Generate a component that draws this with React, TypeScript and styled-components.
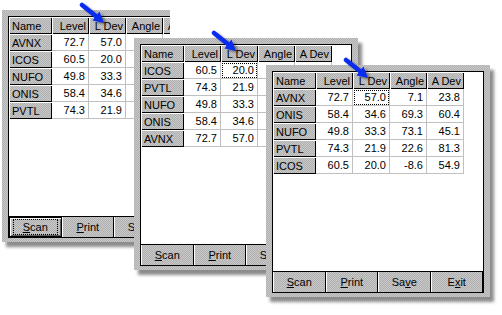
import React from "react";
import styled, { createGlobalStyle, css } from "styled-components";

const dither = css`
  background: repeating-conic-gradient(#c8c8c8 0 25%, #b0b0b0 0 50%) 0 0 / 2px 2px;
`;

const GlobalStyle = createGlobalStyle`
  html, body {
    margin: 0;
    padding: 0;
    background: #fff;
  }
  body {
    font-family: "Liberation Sans", Arial, sans-serif;
    font-size: 11px;
    color: #000;
  }
`;

type Row = string[];

const AVNX = ["AVNX", "72.7", "57.0", "7.1", "23.8"];
const ICOS = ["ICOS", "60.5", "20.0", "-8.6", "54.9"];
const NUFO = ["NUFO", "49.8", "33.3", "73.1", "45.1"];
const ONIS = ["ONIS", "58.4", "34.6", "69.3", "60.4"];
const PVTL = ["PVTL", "74.3", "21.9", "22.6", "81.3"];

const columns = ["Name", "Level", "L Dev", "Angle", "A Dev"];
const widths = [43, 37, 37, 37, 37];

const buttons = [
  { label: "Scan", key: 0 },
  { label: "Print", key: 0 },
  { label: "Save", key: 2 },
  { label: "Exit", key: 1 },
];

function App() {
  return (
    <>
      <GlobalStyle />
      <Desktop>
        <Clip>
          <ScanWindow
            left={2}
            top={10}
            rows={[AVNX, ICOS, NUFO, ONIS, PVTL]}
            defaultButton
          />
        </Clip>
        <ScanWindow left={134} top={38} rows={[ICOS, PVTL, NUFO, ONIS, AVNX]} focus />
        <ScanWindow left={266} top={65} rows={[AVNX, ONIS, NUFO, PVTL, ICOS]} focus />
      </Desktop>
    </>
  );
}

export default App;

function ScanWindow(props: {
  left: number;
  top: number;
  rows: Row[];
  focus?: boolean;
  defaultButton?: boolean;
}) {
  const { left, top, rows, focus, defaultButton } = props;
  return (
    <Frame $left={left} $top={top}>
      <Panel>
        <Grid>
          <colgroup>
            {widths.map((w, i) => (
              <col key={i} style={{ width: w }} />
            ))}
          </colgroup>
          <thead>
            <tr>
              {columns.map((c, i) => (
                <HeadCell key={c} $left={i === 0}>
                  {c}
                </HeadCell>
              ))}
            </tr>
          </thead>
          <tbody>
            {rows.map((r, ri) => (
              <tr key={r[0]}>
                <NameCell>{r[0]}</NameCell>
                {r.slice(1).map((v, ci) => (
                  <DataCell key={ci} $focus={!!focus && ri === 0 && ci === 1}>
                    {v}
                  </DataCell>
                ))}
              </tr>
            ))}
          </tbody>
        </Grid>
        <Filler />
        <ButtonBar>
          {buttons.map((b, i) => (
            <Button key={b.label} $default={!!defaultButton && i === 0}>
              <ButtonLabel $focus={!!defaultButton && i === 0}>
                {b.label.slice(0, b.key)}
                <u>{b.label[b.key]}</u>
                {b.label.slice(b.key + 1)}
              </ButtonLabel>
            </Button>
          ))}
        </ButtonBar>
      </Panel>
      <Arrow width="36" height="30" viewBox="0 0 36 30">
        <line x1="6" y1="5" x2="21" y2="17" stroke="#0a2cf0" strokeWidth="4.5" strokeLinecap="round" />
        <polygon points="28,23 16.5,20.5 23.5,11.5" fill="#0a2cf0" />
      </Arrow>
    </Frame>
  );
}

const Desktop = styled.div`
  position: relative;
  width: 502px;
  height: 315px;
  overflow: hidden;
  background: #fff;
`;

const Clip = styled.div`
  position: absolute;
  left: 0;
  top: 0;
  width: 170px;
  height: 260px;
  overflow: hidden;
`;

const Frame = styled.div<{ $left: number; $top: number }>`
  position: absolute;
  left: ${(p) => p.$left}px;
  top: ${(p) => p.$top}px;
  width: 224px;
  height: 232px;
  box-sizing: border-box;
  padding: 6px 6px 4px 6px;
  ${dither}
  box-shadow: 4px 5px 3px rgba(0, 0, 0, 0.45);
`;

const Panel = styled.div`
  height: 100%;
  box-sizing: border-box;
  border: 1px solid #000;
  background: #fff;
  display: flex;
  flex-direction: column;
`;

const Grid = styled.table`
  border-collapse: separate;
  border-spacing: 0;
  table-layout: fixed;
  width: 191px;
  font-size: 11px;
`;

const bevel = css`
  ${dither}
  box-shadow: inset 1px 1px #fff, inset -1px -1px #000;
`;

const HeadCell = styled.th<{ $left: boolean }>`
  ${bevel}
  height: 17px;
  box-sizing: border-box;
  padding: 0 3px 0 3px;
  font-weight: normal;
  text-align: ${(p) => (p.$left ? "left" : "right")};
  white-space: nowrap;
  overflow: hidden;
`;

const NameCell = styled.td`
  ${bevel}
  height: 17px;
  box-sizing: border-box;
  padding: 0 3px;
  text-align: left;
`;

const DataCell = styled.td<{ $focus: boolean }>`
  height: 17px;
  box-sizing: border-box;
  padding: 0 3px 0 0;
  text-align: right;
  border-right: 1px solid #c0c0c0;
  border-bottom: 1px solid #c0c0c0;
  white-space: nowrap;
  ${(p) =>
    p.$focus &&
    css`
      outline: 1px dotted #000;
      outline-offset: -2px;
    `}
`;

const Filler = styled.div`
  flex: 1;
`;

const ButtonBar = styled.div`
  display: flex;
  height: 21px;
  box-sizing: border-box;
  border-top: 1px solid #000;
`;

const Button = styled.div<{ $default: boolean }>`
  flex: 1;
  display: flex;
  align-items: center;
  justify-content: center;
  box-sizing: border-box;
  ${dither}
  border-left: 1px solid #fff;
  border-right: 1px solid #000;
  ${(p) =>
    p.$default &&
    css`
      border: 1px solid #000;
      box-shadow: inset 1px 1px #fff, inset -1px -1px #606060;
    `}
`;

const ButtonLabel = styled.span<{ $focus: boolean }>`
  font-size: 11px;
  padding: 1px 9px;
  ${(p) =>
    p.$focus &&
    css`
      outline: 1px dotted #000;
      outline-offset: 0;
    `}
`;

const Arrow = styled.svg`
  position: absolute;
  left: 74px;
  top: -10px;
  filter: drop-shadow(3px 2px 1px rgba(0, 0, 0, 0.4));
`;
